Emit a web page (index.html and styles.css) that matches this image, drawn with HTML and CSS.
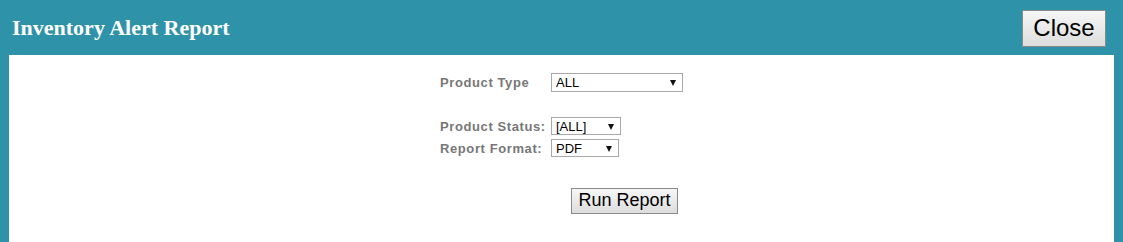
FILE: index.html
```html
<!DOCTYPE html>
<html lang="en">
<head>
    <meta charset="UTF-8">
    <title>Inventory Alert Report</title>
    <link rel="stylesheet" href="styles.css">
</head>
<body>
    <div class="dialog">
        <!-- Title bar -->
        <div class="titlebar">
            <h2 class="title">Inventory Alert Report</h2>
            <button class="close-btn">Close</button>
        </div>

        <!-- Report options -->
        <div class="panel">
            <div class="report-form">
                <div class="row">
                    <label>Product Type</label>
                    <div class="select wide">ALL</div>
                </div>
                <div class="row gap-top">
                    <label>Product Status:</label>
                    <div class="select status">[ALL]</div>
                </div>
                <div class="row tight">
                    <label>Report Format:</label>
                    <div class="select format">PDF</div>
                </div>
                <div class="actions">
                    <button class="run-btn">Run Report</button>
                </div>
            </div>
        </div>
    </div>
</body>
</html>
```

FILE: styles.css
```css
body, html {
    margin: 0;
    padding: 0;
    height: 100%;
    background-color: #2e93a8;
}

.dialog {
    display: flex;
    flex-direction: column;
    height: 100%;
}

.titlebar {
    display: flex;
    align-items: flex-start;
    justify-content: space-between;
    height: 55px;
    padding: 0 17px 0 12px;
}

.title {
    margin: 15px 0 0;
    font-family: "Liberation Serif", serif;
    font-size: 22px;
    font-weight: bold;
    color: #ffffff;
}

.close-btn {
    margin-top: 10px;
    width: 84px;
    height: 37px;
    padding: 0 0 2px;
    font-family: "Liberation Sans", Arial, sans-serif;
    font-size: 24px;
    color: #000;
    background: linear-gradient(#f6f6f6, #dddddd);
    border: 1px solid #8a8a8a;
    border-radius: 0;
}

.panel {
    flex: 1;
    margin: 0 9px;
    background-color: #ffffff;
}

.report-form {
    width: 243px;
    margin: 0 auto;
    padding-top: 18px;
    font-family: "Liberation Sans", Arial, sans-serif;
}

.row {
    display: flex;
    align-items: center;
    height: 19px;
}

.row.gap-top {
    margin-top: 25px;
    height: 18px;
}

.row.tight {
    margin-top: 4px;
    height: 18px;
}

.row label {
    width: 111px;
    font-size: 13px;
    font-weight: bold;
    letter-spacing: 0.6px;
    color: #777777;
}

.select {
    box-sizing: border-box;
    height: 100%;
    padding: 1px 0 0 4px;
    font-size: 13px;
    color: #000;
    border: 1px solid #a9a9a9;
    background-color: #fff;
    position: relative;
    line-height: 15px;
}

.select::after {
    content: "";
    position: absolute;
    right: 6px;
    top: 6px;
    border-left: 3.5px solid transparent;
    border-right: 3.5px solid transparent;
    border-top: 6px solid #111;
}

.select.wide {
    width: 132px;
}

.select.status {
    width: 70px;
}

.select.format {
    width: 68px;
}

.actions {
    padding: 31px 0 0 131px;
}

.run-btn {
    width: 107px;
    height: 26px;
    padding: 0 0 1px;
    font-family: "Liberation Sans", Arial, sans-serif;
    font-size: 18px;
    color: #000;
    background: linear-gradient(#f6f6f6, #dddddd);
    border: 1px solid #8a8a8a;
    border-radius: 0;
}
```
